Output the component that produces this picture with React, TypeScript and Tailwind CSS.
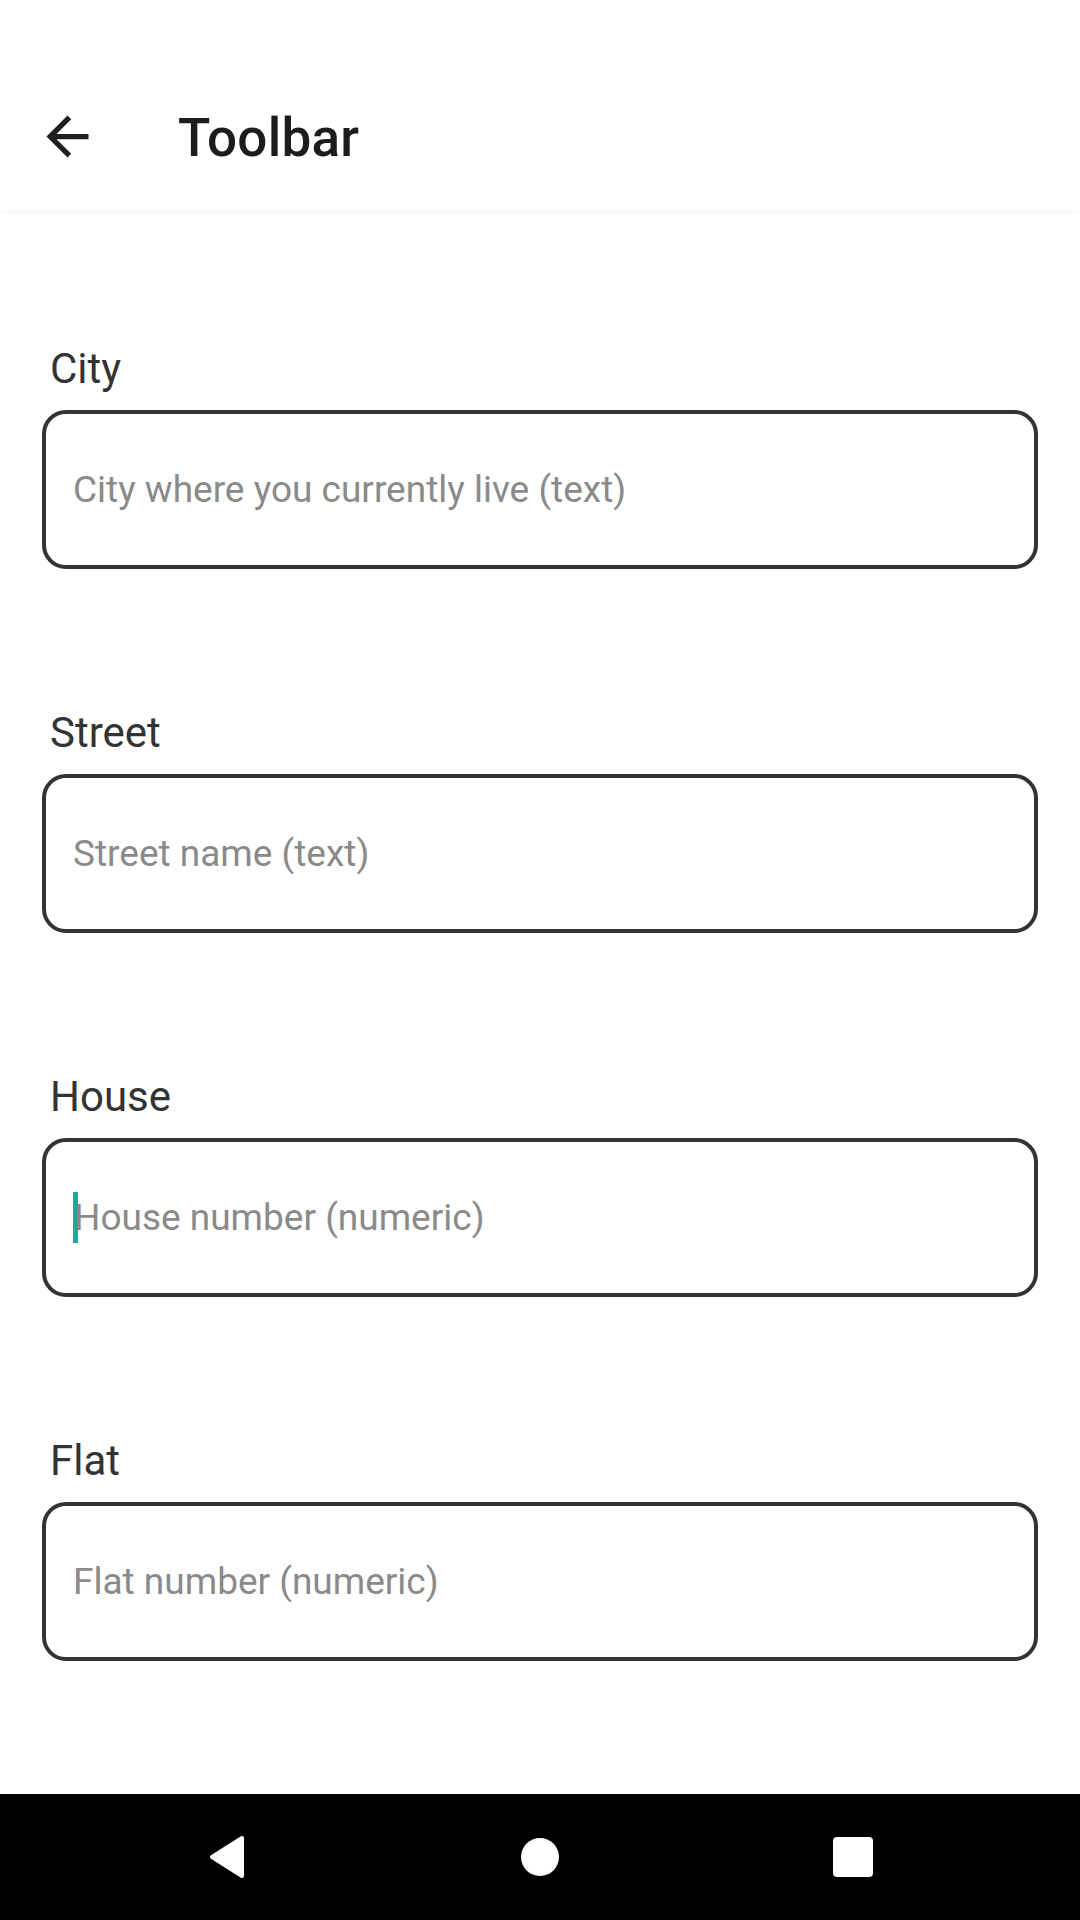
import React from 'react';

interface Field {
  label: string;
  hint: string;
  focused?: boolean;
}

const fields: Field[] = [
  { label: 'City', hint: 'City where you currently live (text)' },
  { label: 'Street', hint: 'Street name (text)' },
  { label: 'House', hint: 'House number (numeric)', focused: true },
  { label: 'Flat', hint: 'Flat number (numeric)' },
];

const FormField: React.FC<{ field: Field }> = ({ field }) => (
  <div className="flex flex-col">
    <span className="ml-[8px] text-[42px] leading-[49px] text-[#333333]">{field.label}</span>
    <div className="mt-[17px] h-[159px] border-4 border-[#333333] rounded-[24px] flex items-center pl-[27px]">
      {field.focused && (
        <span className="inline-block w-[5px] h-[51px] bg-[#26a69a] -mr-[4px]" />
      )}
      <span className="text-[37px] text-[#8a8a8a] leading-[43px]">{field.hint}</span>
    </div>
  </div>
);

export default function App() {
  return (
    <div className="w-[1080px] h-[1920px] flex flex-col bg-white font-['Roboto',sans-serif] overflow-hidden">
      <div className="h-[63px] bg-white" />
      <header className="h-[147px] flex items-center bg-white shadow-[0_3px_6px_rgba(0,0,0,0.035)] relative z-10">
        <svg viewBox="0 0 24 24" className="ml-[36px] w-[63px] h-[63px]" fill="#1f1f1f">
          <path d="M20 11H7.83l5.59-5.59L12 4l-8 8 8 8 1.41-1.41L7.83 13H20v-2z" />
        </svg>
        <h1 className="ml-[79px] mt-[4px] text-[53px] tracking-[0.005em] font-medium text-[#1c1c1c] leading-[61px]">Toolbar</h1>
      </header>

      <main className="flex-1 px-[42px] pt-[134px] flex flex-col gap-[139px]">
        {fields.map(f => (
          <FormField key={f.label} field={f} />
        ))}
      </main>

      <nav className="h-[126px] bg-black flex items-center justify-center gap-[213px]">
        <div className="w-[100px] flex justify-center">
          <svg viewBox="0 0 38 44" className="w-[38px] h-[44px]">
            <path d="M34 3 L4 22 L34 41 Z" fill="#fff" stroke="#fff" strokeWidth="4" strokeLinejoin="round" />
          </svg>
        </div>
        <div className="w-[100px] flex justify-center">
          <div className="w-[38px] h-[38px] rounded-full bg-white" />
        </div>
        <div className="w-[100px] flex justify-center">
          <div className="w-[40px] h-[40px] rounded-[4px] bg-white" />
        </div>
      </nav>
    </div>
  );
}
